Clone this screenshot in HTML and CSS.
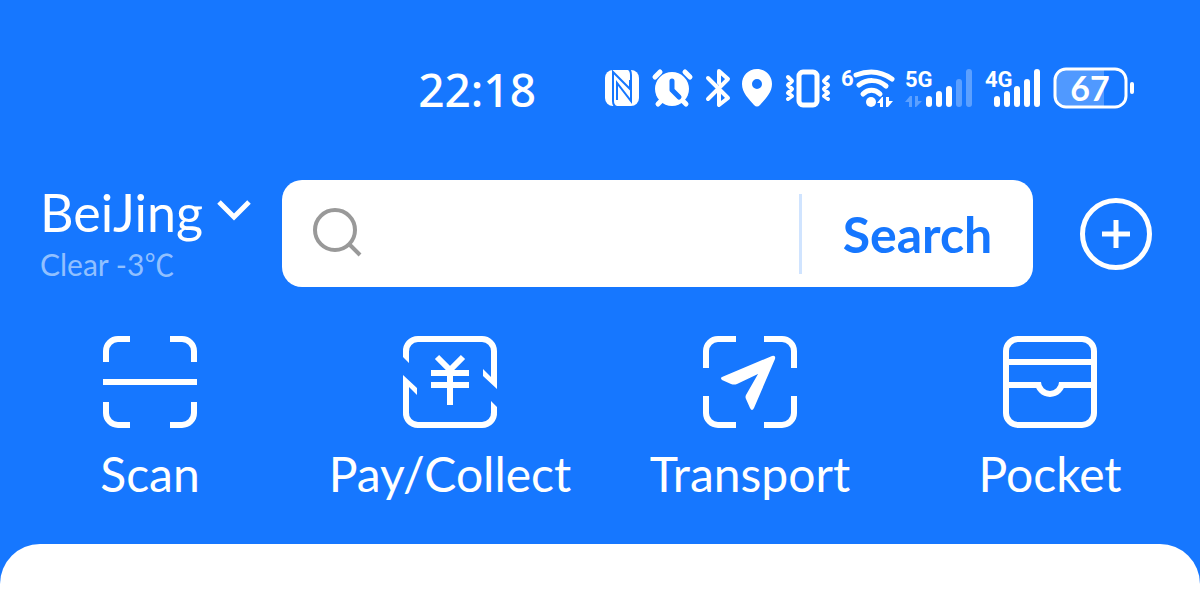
FILE: index.html
```html
<!DOCTYPE html>
<html lang="en">
<head>
    <meta charset="utf-8">
    <meta name="viewport" content="width=device-width, initial-scale=1">
    <title>Home</title>
    <link rel="stylesheet" href="styles.css">
</head>
<body>

    <div class="status">
        <time class="clock">22:18</time>

        <svg width="36" height="40" aria-label="NFC">
            <rect class="fill" x="0" y="2" width="34" height="36" rx="8"/>
            <path class="cut" d="M12 39q-4-1-4-6V4l17 17V12M12 32V15l14 18V7q0-5-3-6"/>
        </svg>
        <svg width="40" height="40" aria-label="Alarm">
            <circle class="fill" cx="19" cy="21" r="17"/>
            <path class="line thick" d="M2 9l5-5M32 4l5 5M5 36l5-5M33 36l-5-5"/>
            <path class="cut hand" d="M19 13v9l7 7"/>
        </svg>
        <svg width="25" height="40" aria-label="Bluetooth">
            <path class="line" d="M3 10l20 20-9 7V25M14 15V3l9 8L3 31"/>
        </svg>
        <svg width="31" height="40" aria-label="Location">
            <path class="fill" fill-rule="evenodd" d="M15 1c9 0 15 7 15 15 0 9-7 15-12 21-2 2-4 2-6 0C7 31 0 25 0 16 0 8 6 1 15 1zm0 10a5 5 0 1 0 0 10 5 5 0 0 0 0-10z"/>
        </svg>
        <svg width="45" height="40" aria-label="Vibrate">
            <rect class="line thick" x="14" y="4" width="18" height="33" rx="4"/>
            <path class="line" d="M3 9l4 4-4 4 4 4-4 4 4 3-4 3M43 9l-4 4 4 4-4 4 4 4-4 3 4 3"/>
        </svg>
        <svg width="51" height="40" aria-label="Wi-Fi 6">
            <text class="tag" x="-1" y="18">6</text>
            <path class="line thick" d="M14 7c13-5 25-4 36 4M17 17c8-6 19-6 27 1M21 26c5-5 12-5 17 0"/>
            <circle class="fill" cx="29" cy="34" r="5"/>
            <path class="fill" d="M35 35l5-6h1v10h-3v-4zM51 33l-5 6h-2V29h3v4z"/>
        </svg>
        <svg width="68" height="40" aria-label="5G signal">
            <text class="tag" x="0" y="19">5G</text>
            <path class="fill dim" d="M0 34l5-6h2v11H4v-5zM17 33l-6 6h-1V28h3v5z"/>
            <path class="bar" d="M24 31v5M34 26v10M44 21v15"/>
            <path class="bar dim" d="M54 14v22M64 4v32"/>
        </svg>
        <svg width="56" height="40" aria-label="4G signal">
            <text class="tag" x="0" y="19">4G</text>
            <path class="bar" d="M12 31v5M22 26v10M32 21v15M42 14v22M52 4v32"/>
        </svg>
        <svg width="82" height="40" aria-label="Battery">
            <path class="fill charge" d="M12 2h39v36H12a10 10 0 0 1-10-10V12A10 10 0 0 1 12 2z"/>
            <rect class="line thin" x="2" y="1" width="71" height="38" rx="11"/>
            <rect class="fill" x="77" y="14" width="4" height="12" rx="2"/>
            <text class="level" x="37" y="33">67</text>
        </svg>
    </div>

    <header class="top">
        <button class="place" type="button">
            <span class="city">BeiJing
                <svg width="32" height="24"><path class="line butt" d="M1 2l15 15L31 2"/></svg>
            </span>
            <span class="weather">Clear -3℃</span>
        </button>

        <form class="search" role="search">
            <svg width="50" height="50">
                <circle cx="23" cy="21" r="20"/>
                <path d="M37 35l11 11"/>
            </svg>
            <input type="search" aria-label="Search">
            <button type="submit">Search</button>
        </form>

        <button class="add" type="button" aria-label="Add">
            <svg width="30" height="30"><path class="line butt" d="M15 1v28M1 15h28"/></svg>
        </button>
    </header>

    <nav class="actions">
        <a href="#scan">
            <svg width="96" height="92">
                <path class="icon" d="M4 26V15A12 12 0 0 1 16 3h12M68 3h12a12 12 0 0 1 12 12v11M92 66v11a12 12 0 0 1-12 12H68M28 89H16A12 12 0 0 1 4 77V66M1 46h94"/>
            </svg>
            Scan
        </a>
        <a href="#pay">
            <svg width="96" height="92">
                <path class="icon" d="M4 16A12 12 0 0 1 16 3h64a12 12 0 0 1 12 12M4 76a12 12 0 0 0 12 13h64a12 12 0 0 0 12-13"/>
                <path class="fill" d="M1 15v6l6 6V15zM95 15v38L81 40v-7l8 8V15zM95 77v-6l-6-6v12zM1 77V39l14 13v7l-8-8v26z"/>
                <path class="icon" d="M35 21l13 13 13-13M29 37h38M29 49h38M48 33v36"/>
            </svg>
            Pay/Collect
        </a>
        <a href="#transport">
            <svg width="96" height="92">
                <path class="icon" d="M4 32V15A12 12 0 0 1 16 3h18M62 3h18a12 12 0 0 1 12 12v17M92 60v17a12 12 0 0 1-12 12H62M34 89H16A12 12 0 0 1 4 77V60"/>
                <path class="fill" d="M20 41l50-21q4-1 3 3L52 72q-2 4-4 0l-4-9q-1-2 0-4l12-21-21 10q-3 1-6 0l-9-4q-2-2 0-3z"/>
            </svg>
            Transport
        </a>
        <a href="#pocket">
            <svg width="96" height="92">
                <rect class="icon" x="4" y="3" width="88" height="86" rx="12"/>
                <path class="icon" d="M4 26h88M4 49h31M61 49h31M36 46a12 12 0 0 0 24 0"/>
            </svg>
            Pocket
        </a>
    </nav>

    <main class="sheet"></main>

</body>
</html>
```
FILE: styles.css
```css
body {
    margin: 0;
    min-height: 100vh;
    display: flex;
    flex-direction: column;
    background-color: #1677ff;
    color: #fff;
    font-family: Lato, "Noto Sans CJK SC", sans-serif;
}
button {
    padding: 0;
    border: 0;
    background: none;
    color: inherit;
    font: inherit;
    cursor: pointer;
}
svg {
    display: block;
    flex: none;
    overflow: visible;
}

/* shared drawing styles */
.fill {
    fill: #fff;
}
.line {
    fill: none;
    stroke: #fff;
    stroke-width: 4px;
    stroke-linecap: round;
    stroke-linejoin: round;
}
.thin {
    stroke-width: 3px;
}
.thick {
    stroke-width: 5px;
}
.butt {
    stroke-width: 5px;
    stroke-linecap: butt;
    stroke-linejoin: miter;
}
.cut {
    fill: none;
    stroke: #1677ff;
    stroke-width: 2px;
}
.hand {
    stroke-width: 5px;
    stroke-linecap: round;
    stroke-linejoin: round;
}
.bar {
    stroke: #fff;
    stroke-width: 6px;
    stroke-linecap: round;
}
.dim {
    opacity: .3;
}
.charge {
    opacity: .25;
}
.icon {
    fill: none;
    stroke: #fff;
    stroke-width: 6px;
}

.status {
    display: flex;
    justify-content: flex-end;
    align-items: center;
    gap: 12px;
    height: 40px;
    padding: 68px 65px 0 0;
}
.clock {
    margin-right: 57px;
    padding-top: 2px;
    font: 500 46px/40px "Noto Sans", sans-serif;
}
.tag {
    fill: #fff;
    font: bold 22px Roboto, sans-serif;
}
.level {
    fill: #fff;
    font: bold 34px Lato, sans-serif;
    text-anchor: middle;
}

.top {
    display: flex;
    align-items: center;
    margin-top: 72px;
    padding: 0 48px 0 40px;
}
.place {
    width: 210px;
    margin-right: 32px;
    text-align: left;
}
.city {
    display: flex;
    justify-content: space-between;
    align-items: center;
    margin-bottom: 4px;
    font-size: 52px;
    line-height: 56px;
}
.weather {
    display: block;
    color: #91c0ff;
    font-size: 30px;
    line-height: 40px;
}
.search {
    flex: 1;
    display: flex;
    align-items: center;
    min-width: 0;
    height: 107px;
    margin-right: 47px;
    padding-left: 30px;
    border-radius: 20px;
    background-color: #fff;
}
.search svg {
    fill: none;
    stroke: #999;
    stroke-width: 4px;
}
.search input {
    flex: 1;
    min-width: 0;
    height: 80px;
    padding: 0 16px;
    border: 0;
    outline: 0;
    background: none;
    font: 40px Lato, sans-serif;
}
.search button {
    width: 234px;
    height: 80px;
    border-left: 3px solid #d0e4ff;
    color: #1677ff;
    font-size: 50px;
    font-weight: bold;
}
.add {
    display: flex;
    justify-content: center;
    align-items: center;
    box-sizing: border-box;
    width: 72px;
    height: 72px;
    border: 5px solid #fff;
    border-radius: 50%;
}

.actions {
    display: grid;
    grid-template-columns: repeat(4, 1fr);
    margin: 49px 0 40px;
}
.actions a {
    display: flex;
    flex-direction: column;
    align-items: center;
    gap: 16px;
    color: #fff;
    font-size: 48px;
    line-height: 60px;
    text-decoration: none;
}

.sheet {
    flex: 1;
    min-height: 56px;
    border-radius: 40px 40px 0 0;
    background-color: #fff;
}
```
